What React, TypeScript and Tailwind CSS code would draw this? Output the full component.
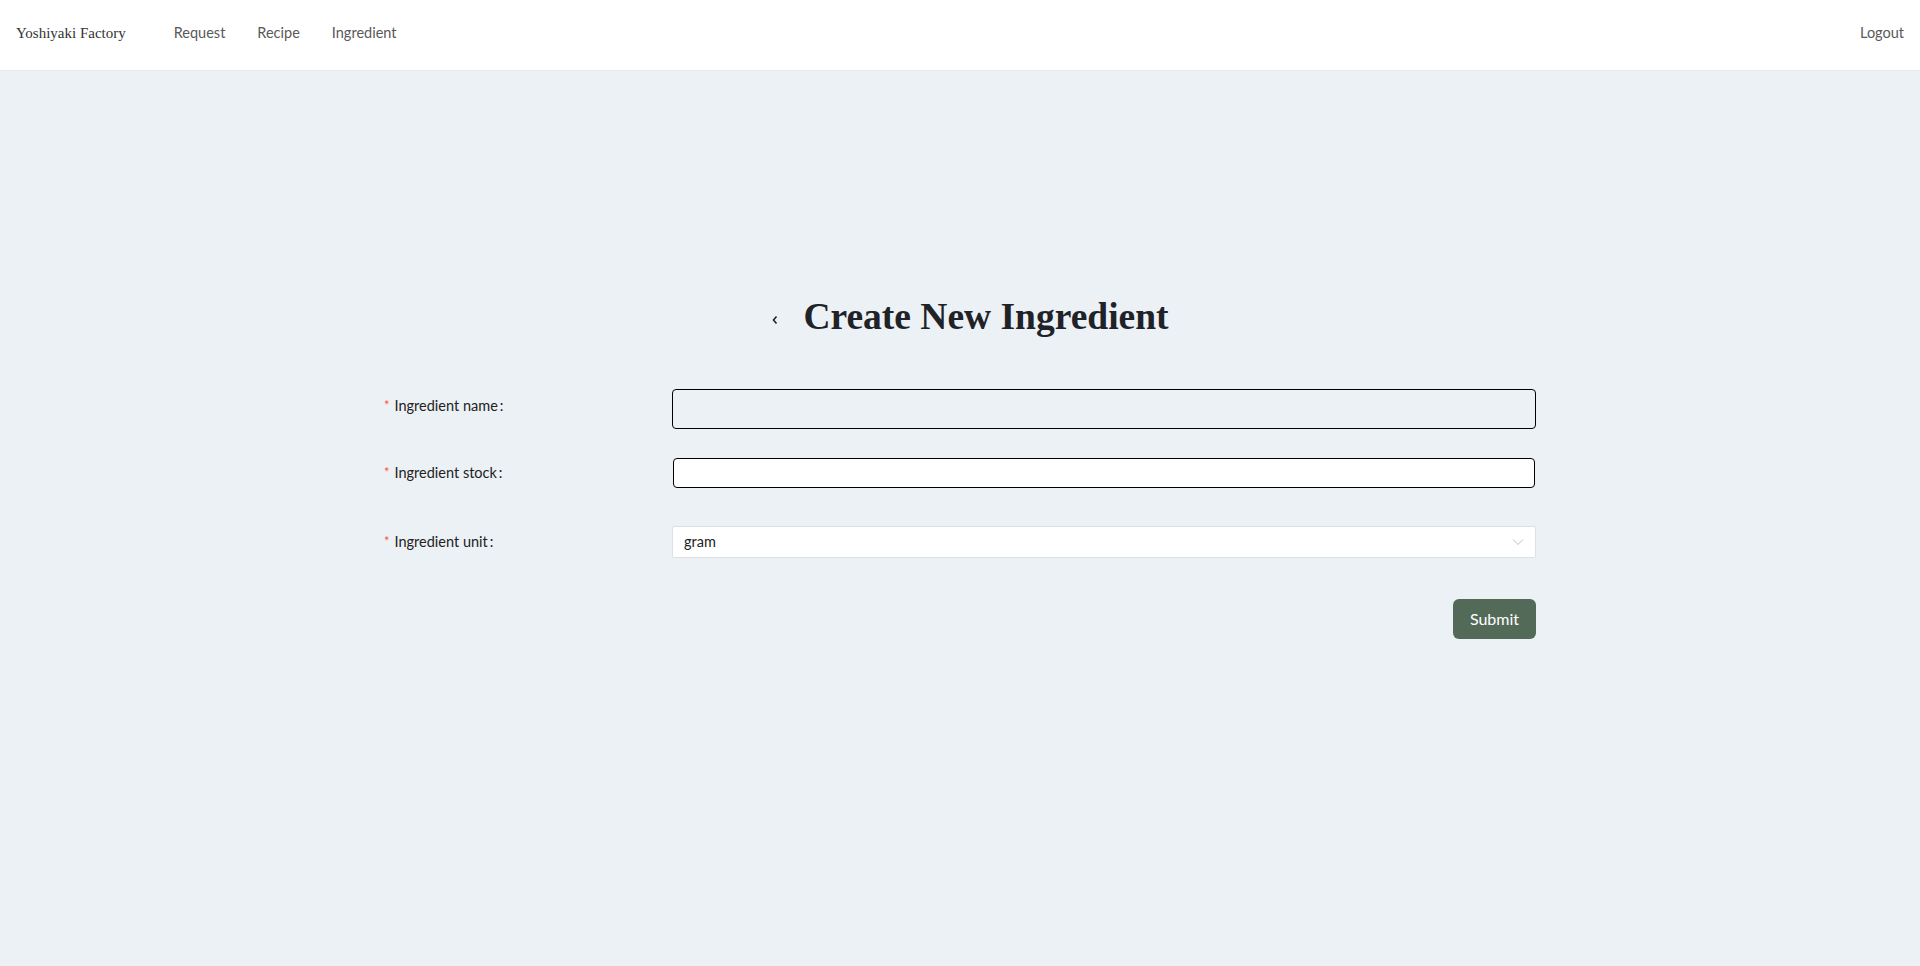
import React from "react";

const sans = { fontFamily: "Lato, 'Noto Sans', sans-serif" };

function Label({ text }: { text: string }) {
  return (
    <div className="w-[288px] shrink-0 flex items-center text-[14.5px] text-[#222]" style={sans}>
      <span className="text-[#ff4d4f] mr-[5px] text-[13px]">*</span>
      <span>{text}</span>
      <span className="ml-[2px] mr-[8px]">:</span>
    </div>
  );
}

export default function App() {
  return (
    <div className="min-h-[966px] bg-[#ecf1f5] flex flex-col">
      <header className="h-[71px] bg-white border-b border-[#e3e8ee] flex items-center px-[16px] pb-[4px]">
        <div className="text-[15px] text-[#333] mr-[48px]" style={{ fontFamily: "'Liberation Serif', serif" }}>
          Yoshiyaki Factory
        </div>
        <nav className="flex gap-[32px] text-[14.5px] text-[#595959]" style={sans}>
          <span>Request</span>
          <span>Recipe</span>
          <span>Ingredient</span>
        </nav>
        <div className="ml-auto text-[14.5px] text-[#595959]" style={sans}>Logout</div>
      </header>

      <main className="flex flex-col items-center pt-[227px]">
        <div className="flex items-center gap-[24px] ml-[20px]">
          <svg className="mt-[6px]" width="8" height="10" viewBox="0 0 8 10" fill="none">
            <path d="M5.5 1.5 L2.5 5 L5.5 8.5" stroke="#222" strokeWidth="1.6" />
          </svg>
          <h1 className="text-[37.5px] font-bold text-[#1f2328] leading-none" style={{ fontFamily: "'Liberation Serif', serif" }}>
            Create New Ingredient
          </h1>
        </div>

        <form className="w-[1152px] mt-[53px] flex flex-col">
          <div className="flex items-start">
            <div className="pt-[6px]"><Label text="Ingredient name" /></div>
            <input className="w-[864px] h-[40px] rounded-[4px] border-[1.5px] border-black bg-transparent outline-none" />
          </div>
          <div className="flex items-center mt-[29px]">
            <Label text="Ingredient stock" />
            <input className="w-[862px] ml-[1px] h-[30px] rounded-[4px] border-[1.5px] border-black bg-white outline-none" />
          </div>
          <div className="flex items-center mt-[38px]">
            <Label text="Ingredient unit" />
            <div className="w-[864px] h-[32px] bg-white border border-[#dcdfe3] rounded-[2px] flex items-center px-[11px] text-[14.5px] text-[#222]" style={sans}>
              <span>gram</span>
              <svg className="ml-auto" width="12" height="12" viewBox="0 0 12 12" fill="none">
                <path d="M1 3.5 L6 8.5 L11 3.5" stroke="#bfbfbf" strokeWidth="1" />
              </svg>
            </div>
          </div>
          <div className="flex justify-end mt-[41px]">
            <button type="button" className="w-[83px] h-[40px] rounded-[6px] bg-[#546a59] text-white text-[16px]" style={sans}>
              Submit
            </button>
          </div>
        </form>
      </main>
    </div>
  );
}
